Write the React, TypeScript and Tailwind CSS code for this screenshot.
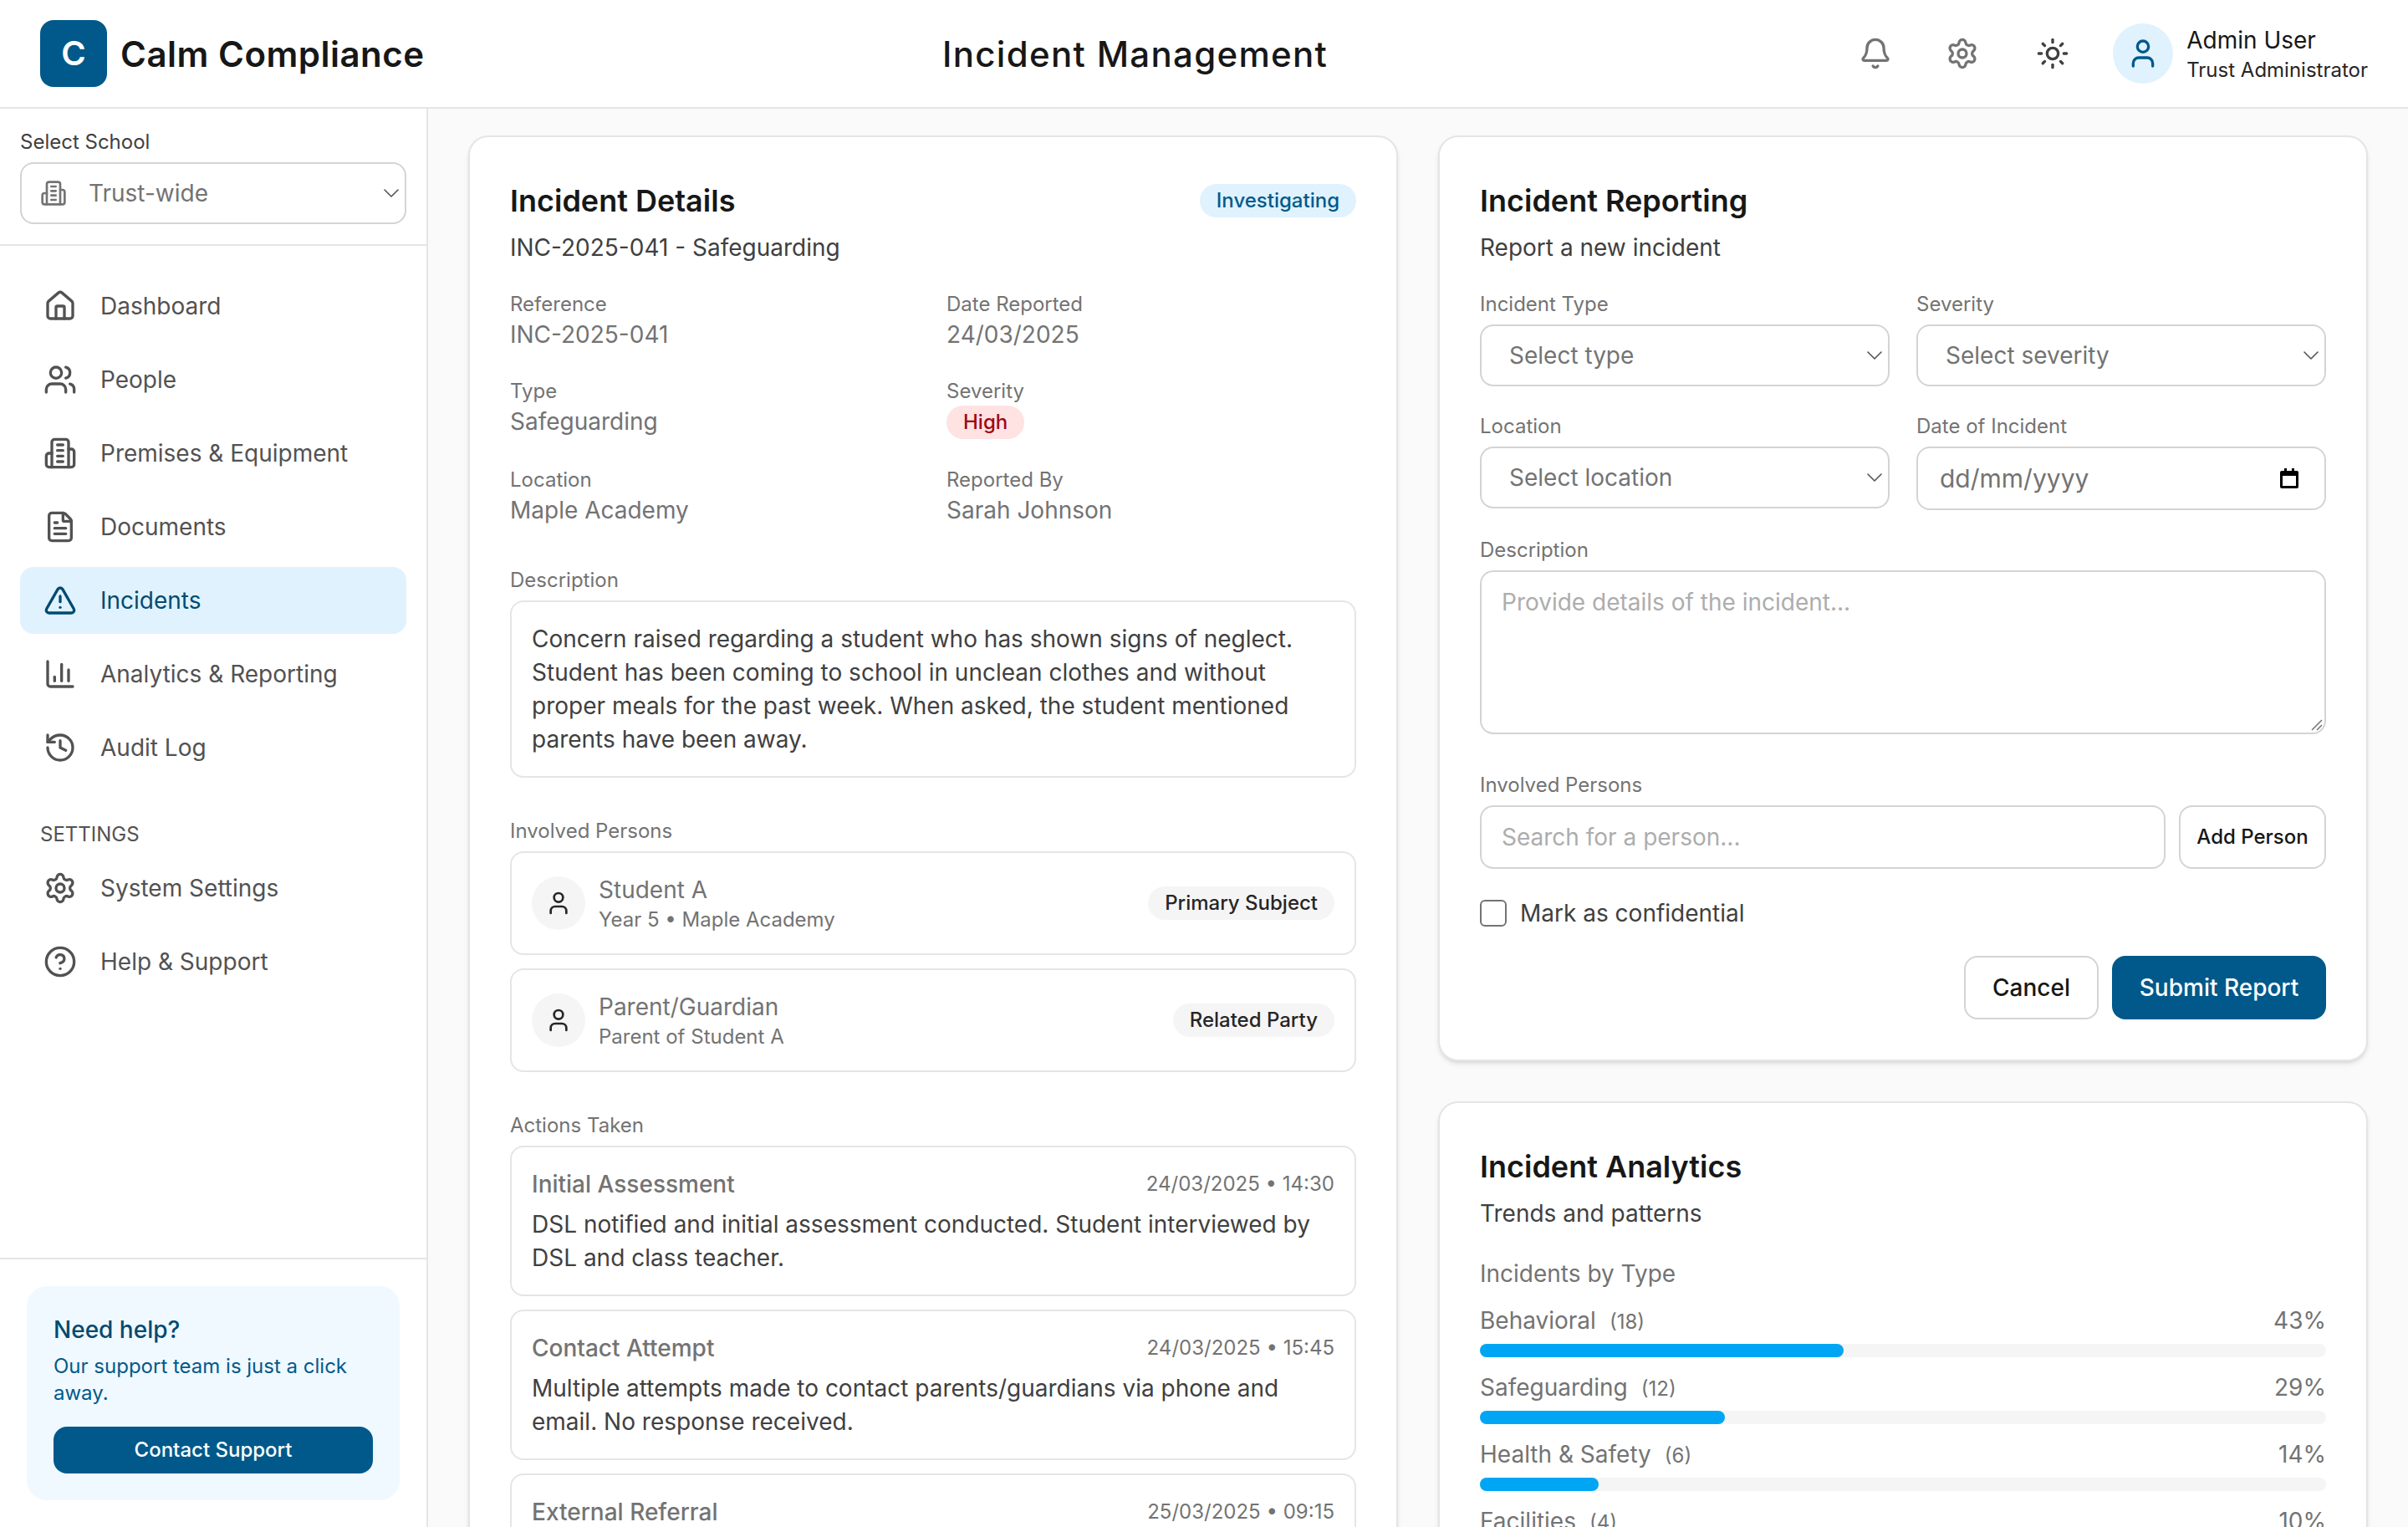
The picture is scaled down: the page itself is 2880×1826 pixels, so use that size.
import React from 'react';
import {
  Bell,
  ChartColumn,
  ChevronDown,
  CircleHelp,
  FileText,
  History,
  House,
  Settings,
  Sun,
  TriangleAlert,
  User,
  Users,
} from 'lucide-react';

const BuildingIcon = ({ size = 24 }: { size?: number }) => (
  <svg
    width={size}
    height={size}
    viewBox="0 0 24 24"
    fill="none"
    stroke="currentColor"
    strokeWidth="2"
    strokeLinecap="round"
    strokeLinejoin="round"
  >
    <path d="M6 22V4a2 2 0 0 1 2-2h8a2 2 0 0 1 2 2v18Z" />
    <path d="M6 12H4a2 2 0 0 0-2 2v6a2 2 0 0 0 2 2h2" />
    <path d="M18 9h2a2 2 0 0 1 2 2v9a2 2 0 0 1-2 2h-2" />
    <path d="M10 6h4" />
    <path d="M10 10h4" />
    <path d="M10 14h4" />
    <path d="M10 18h4" />
  </svg>
);

const navItems = [
  { label: 'Dashboard', icon: House },
  { label: 'People', icon: Users },
  { label: 'Premises & Equipment', icon: BuildingIcon },
  { label: 'Documents', icon: FileText },
  { label: 'Incidents', icon: TriangleAlert, active: true },
  { label: 'Analytics & Reporting', icon: ChartColumn },
  { label: 'Audit Log', icon: History },
];

const settingsItems = [
  { label: 'System Settings', icon: Settings },
  { label: 'Help & Support', icon: CircleHelp },
];

const persons = [
  { name: 'Student A', detail: 'Year 5 • Maple Academy', role: 'Primary Subject' },
  { name: 'Parent/Guardian', detail: 'Parent of Student A', role: 'Related Party' },
];

const actions = [
  {
    title: 'Initial Assessment',
    date: '24/03/2025 • 14:30',
    body: 'DSL notified and initial assessment conducted. Student interviewed by DSL and class teacher.',
  },
  {
    title: 'Contact Attempt',
    date: '24/03/2025 • 15:45',
    body: 'Multiple attempts made to contact parents/guardians via phone and email. No response received.',
  },
  { title: 'External Referral', date: '25/03/2025 • 09:15', body: '' },
];

const typeStats = [
  { label: 'Behavioral', count: 18, pct: 43 },
  { label: 'Safeguarding', count: 12, pct: 29 },
  { label: 'Health & Safety', count: 6, pct: 14 },
  { label: 'Facilities', count: 4, pct: 10 },
];

const NavRow = ({ item }: { item: { label: string; icon: React.ElementType; active?: boolean } }) => {
  const Icon = item.icon;
  return (
    <div
      className={`flex h-20 items-center gap-7 rounded-2xl pl-7 text-[28px] ${
        item.active ? 'bg-sky-100 text-sky-900' : 'text-neutral-600'
      }`}
    >
      <Icon size={40} />
      <span>{item.label}</span>
    </div>
  );
};

const Field = ({ label, value }: { label: string; value: React.ReactNode }) => (
  <div>
    <div className="text-[24px] leading-8 text-neutral-500">{label}</div>
    <div className="text-[28px] leading-10 text-neutral-500">{value}</div>
  </div>
);

const FakeSelect = ({ label }: { label: string }) => (
  <div className="flex h-[74px] items-center justify-between rounded-2xl border-2 border-neutral-300 bg-white pl-[33px] text-[28px] text-neutral-500">
    <span>{label}</span>
    <ChevronDown size={32} strokeWidth={1.2} className="text-neutral-600" />
  </div>
);

const Label = ({ children }: { children: React.ReactNode }) => (
  <div className="mb-2 text-[24px] leading-8 text-neutral-500">{children}</div>
);

export default function App() {
  return (
    <div className="flex h-screen flex-col overflow-hidden bg-neutral-50 font-['Inter',sans-serif] text-neutral-900">
      {/* Header */}
      <header className="flex h-[130px] shrink-0 items-center justify-between border-b-2 border-neutral-200 bg-white pl-12 pr-12">
        <div className="flex w-[444px] shrink-0 items-center gap-4 whitespace-nowrap">
          <div className="flex h-20 w-20 shrink-0 items-center justify-center rounded-2xl bg-sky-800 text-[40px] font-semibold text-white">
            C
          </div>
          <span className="text-[42px] font-semibold tracking-[0.5px] text-neutral-900">Calm Compliance</span>
        </div>
        <h1 className="text-[42px] font-medium tracking-[1.3px] text-neutral-900">Incident Management</h1>
        <div className="flex items-center">
          <Bell size={40} className="text-neutral-500" />
          <Settings size={40} className="ml-[64px] text-neutral-500" />
          <Sun size={40} className="ml-[68px] text-neutral-700" />
          <div className="ml-[52px] flex h-[72px] w-[72px] items-center justify-center rounded-full bg-sky-100 text-sky-800">
            <User size={40} />
          </div>
          <div className="ml-4">
            <div className="text-[28px] leading-10 text-neutral-900">Admin User</div>
            <div className="text-[24px] leading-8 text-neutral-800">Trust Administrator</div>
          </div>
        </div>
      </header>

      <div className="flex min-h-0 flex-1">
        {/* Sidebar */}
        <aside className="flex w-[512px] shrink-0 flex-col border-r-2 border-neutral-200 bg-white">
          <div className="border-b-2 border-neutral-200 p-6">
            <div className="mb-2 text-[24px] leading-8 text-neutral-700">Select School</div>
            <div className="flex h-[74px] items-center justify-between rounded-2xl border-2 border-neutral-300 pl-[22px] text-[28px] text-neutral-500">
              <div className="flex items-center gap-[26px]">
                <BuildingIcon size={32} />
                <span>Trust-wide</span>
              </div>
              <ChevronDown size={32} strokeWidth={1.2} className="text-neutral-600" />
            </div>
          </div>

          <nav className="flex-1 px-6 pt-8">
            <div className="flex flex-col gap-2">
              {navItems.map((item) => (
                <NavRow key={item.label} item={item} />
              ))}
            </div>
            <div className="mb-2 mt-12 px-6 text-[24px] uppercase leading-8 text-neutral-600">Settings</div>
            <div className="flex flex-col gap-2">
              {settingsItems.map((item) => (
                <NavRow key={item.label} item={item} />
              ))}
            </div>
          </nav>

          <div className="border-t-2 border-neutral-200 p-8">
            <div className="rounded-3xl bg-sky-50 p-8">
              <div className="text-[28px] font-medium leading-10 text-sky-900">Need help?</div>
              <p className="mb-6 mt-2 text-[24px] leading-8 text-sky-800">Our support team is just a click away.</p>
              <button className="h-14 w-full rounded-2xl bg-sky-800 text-[24px] font-medium text-white">
                Contact Support
              </button>
            </div>
          </div>
        </aside>

        {/* Main */}
        <main className="grid min-w-0 flex-1 grid-cols-2 items-start gap-12 overflow-hidden px-12 pt-8">
          {/* Incident details */}
          <section className="rounded-3xl border-2 border-neutral-200 bg-white p-12 shadow-md">
            <div className="flex items-start justify-between">
              <h2 className="text-[36px] font-semibold leading-14 text-neutral-900">Incident Details</h2>
              <span className="mt-[8px] flex h-10 items-center rounded-full bg-sky-100 px-5 text-[24px] font-medium text-sky-800">
                Investigating
              </span>
            </div>
            <p className="mt-2 text-[28px] leading-10 text-neutral-700">INC-2025-041 - Safeguarding</p>

            <div className="mt-8 grid grid-cols-2 gap-x-8 gap-y-8">
              <Field label="Reference" value="INC-2025-041" />
              <Field label="Date Reported" value="24/03/2025" />
              <Field label="Type" value="Safeguarding" />
              <Field
                label="Severity"
                value={
                  <span className="my-[1px] flex h-10 w-fit items-center rounded-full bg-red-100 px-5 text-[24px] font-medium text-red-800">
                    High
                  </span>
                }
              />
              <Field label="Location" value="Maple Academy" />
              <Field label="Reported By" value="Sarah Johnson" />
            </div>

            <div className="mt-12">
              <Label>Description</Label>
              <div className="rounded-2xl border-2 border-neutral-200 p-6 text-[28px] leading-10 text-neutral-700">
                Concern raised regarding a student who has shown signs of neglect. Student has been coming to school in
                unclean clothes and without proper meals for the past week. When asked, the student mentioned parents
                have been away.
              </div>
            </div>

            <div className="mt-12">
              <Label>Involved Persons</Label>
              <div className="flex flex-col gap-4">
                {persons.map((p) => (
                  <div
                    key={p.name}
                    className="flex items-center justify-between rounded-2xl border-2 border-neutral-200 p-6"
                  >
                    <div className="flex items-center gap-4">
                      <div className="flex h-16 w-16 items-center justify-center rounded-full bg-neutral-100 text-neutral-800">
                        <User size={32} />
                      </div>
                      <div>
                        <div className="text-[28px] leading-10 text-neutral-500">{p.name}</div>
                        <div className="text-[24px] leading-8 text-neutral-500">{p.detail}</div>
                      </div>
                    </div>
                    <span className="flex h-10 items-center rounded-full bg-neutral-100 px-5 text-[24px] font-medium text-neutral-800">
                      {p.role}
                    </span>
                  </div>
                ))}
              </div>
            </div>

            <div className="mt-12">
              <Label>Actions Taken</Label>
              <div className="flex flex-col gap-4">
                {actions.map((a) => (
                  <div key={a.title} className="rounded-2xl border-2 border-neutral-200 p-6">
                    <div className="flex items-center justify-between">
                      <span className="text-[28px] font-medium leading-10 text-neutral-500">{a.title}</span>
                      <span className="text-[24px] text-neutral-500">{a.date}</span>
                    </div>
                    {a.body && <p className="mt-2 text-[28px] leading-10 text-neutral-700">{a.body}</p>}
                  </div>
                ))}
              </div>
            </div>
          </section>

          <div className="flex flex-col gap-12">
            {/* Reporting form */}
            <section className="rounded-3xl border-2 border-neutral-200 bg-white p-12 shadow-md">
              <h2 className="text-[36px] font-semibold leading-14 text-neutral-900">Incident Reporting</h2>
              <p className="mt-2 text-[28px] leading-10 text-neutral-700">Report a new incident</p>

              <div className="mt-8 grid grid-cols-2 gap-x-8 gap-y-8">
                <div>
                  <Label>Incident Type</Label>
                  <FakeSelect label="Select type" />
                </div>
                <div>
                  <Label>Severity</Label>
                  <FakeSelect label="Select severity" />
                </div>
                <div>
                  <Label>Location</Label>
                  <FakeSelect label="Select location" />
                </div>
                <div>
                  <Label>Date of Incident</Label>
                  <div className="flex h-[76px] items-center justify-between rounded-2xl border-2 border-neutral-300 pl-[26px] pr-[30px] text-[30px] text-neutral-500">
                    <span>dd/mm/yyyy</span>
                    <svg width="24" height="24" viewBox="0 0 24 24" className="text-black">
                      <path
                        fill="currentColor"
                        d="M6 0h3v3h6V0h3v3h3a2 2 0 0 1 2 2v17a2 2 0 0 1-2 2H3a2 2 0 0 1-2-2V5a2 2 0 0 1 2-2h3zM4 9v12h16V9z"
                      />
                    </svg>
                  </div>
                </div>
              </div>

              <div className="mt-8">
                <Label>Description</Label>
                <div className="relative">
                  <textarea
                    placeholder="Provide details of the incident..."
                    className="block h-[196px] w-full resize-none rounded-2xl border-2 border-neutral-300 px-6 py-4 text-[28px] leading-10 placeholder:text-[#adadad]"
                  />
                  <svg
                    width="16"
                    height="16"
                    viewBox="0 0 16 16"
                    className="absolute bottom-[4px] right-[4px] text-neutral-500"
                  >
                    <path d="M15 3 3 15M15 9l-6 6" stroke="currentColor" strokeWidth="1.5" fill="none" />
                  </svg>
                </div>
              </div>

              <div className="mt-[45px]">
                <Label>Involved Persons</Label>
                <div className="flex gap-4">
                  <input
                    placeholder="Search for a person..."
                    className="h-[76px] min-w-0 flex-1 rounded-2xl border-2 border-neutral-300 px-6 text-[28px] placeholder:text-[#adadad]"
                  />
                  <button className="h-[76px] w-[176px] rounded-2xl border-2 border-neutral-300 text-[24px] font-medium text-neutral-900">
                    Add Person
                  </button>
                </div>
              </div>

              <div className="mt-8 flex items-center gap-4">
                <div className="h-8 w-8 rounded-md border-2 border-neutral-500" />
                <span className="text-[28px] text-neutral-700">Mark as confidential</span>
              </div>

              <div className="mt-[30px] flex justify-end gap-4">
                <button className="h-[76px] w-[161px] rounded-2xl border-2 border-neutral-300 text-[28px] font-medium text-neutral-900">
                  Cancel
                </button>
                <button className="h-[76px] w-[256px] rounded-2xl bg-sky-800 text-[28px] font-medium text-white">
                  Submit Report
                </button>
              </div>
            </section>

            {/* Analytics */}
            <section className="rounded-3xl border-2 border-neutral-200 bg-white p-12 shadow-md">
              <h2 className="text-[36px] font-semibold leading-14 text-neutral-900">Incident Analytics</h2>
              <p className="mt-2 text-[28px] leading-10 text-neutral-700">Trends and patterns</p>
              <div className="mb-4 mt-8 text-[28px] leading-10 text-neutral-500">Incidents by Type</div>
              <div className="flex flex-col gap-4">
                {typeStats.map((s) => (
                  <div key={s.label}>
                    <div className="flex h-10 items-center justify-between text-[28px] text-neutral-500">
                      <span>
                        {s.label}
                        <span className="ml-4 text-[24px]">({s.count})</span>
                      </span>
                      <span>{s.pct}%</span>
                    </div>
                    <div className="mt-2 h-4 rounded-full bg-neutral-100">
                      <div className="h-4 rounded-full bg-sky-500" style={{ width: `${s.pct}%` }} />
                    </div>
                  </div>
                ))}
              </div>
            </section>
          </div>
        </main>
      </div>
    </div>
  );
}
